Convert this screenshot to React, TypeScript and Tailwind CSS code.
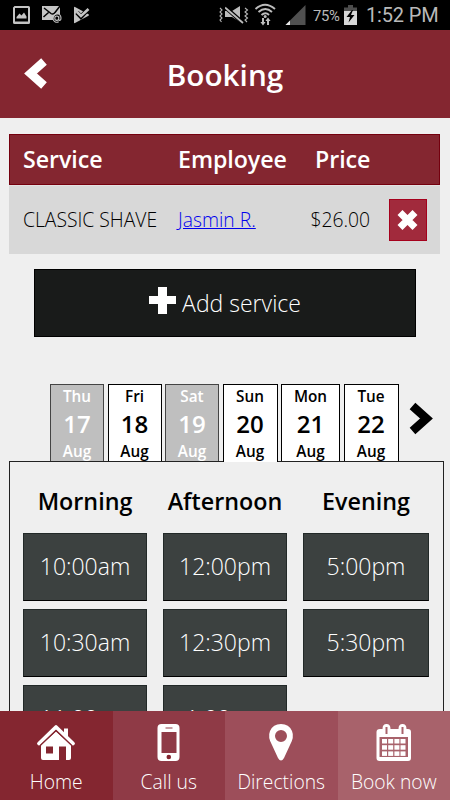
import { clsx } from "clsx";
import type { ReactNode } from "react";

const days = [
  { day: "Thu", date: 17, width: "w-[54px]", disabled: true },
  { day: "Fri", date: 18, width: "w-[54px]" },
  { day: "Sat", date: 19, width: "w-[54px]", disabled: true },
  { day: "Sun", date: 20, width: "w-[55px]", active: true },
  { day: "Mon", date: 21, width: "w-[59px]" },
  { day: "Tue", date: 22, width: "w-[55px]" },
];

const slots = [
  { name: "Morning", times: ["10:00am", "10:30am", "11:00am"] },
  { name: "Afternoon", times: ["12:00pm", "12:30pm", "1:00pm"] },
  { name: "Evening", times: ["5:00pm", "5:30pm"] },
];

function StatusBar() {
  return (
    <div className="flex h-[30px] shrink-0 items-center bg-black font-[Roboto,sans-serif] text-[#b9b9b9]">
      <svg width="225" height="30" fill="#c4c4c4">
        <path fillRule="evenodd" d="M14.500 6h14q1.500 0 1.500 1.500v15q0 1.500-1.500 1.500h-14q-1.500 0-1.500-1.500v-15Q13 7.500 14.500 6zM15 8v13.500h13V8z" />
        <path d="M16.500 18.500v-1.500l3-3.500 2 2 2.500-3 2.500 4v2z" />
        <path d="M42 6h18v8q-6-1-7 6H42z" />
        <path d="M43.500 17l5-4.500M44 8l7 5.500q2 1.500 4-1L60 6" fill="none" stroke="#000" strokeWidth="1.500" />
        <path d="M58.800 18.200a2 2.200 0 1 1-4 0a2 2.200 0 0 1 4 0zm0-2v3q0 1.300 1.100 1.300q1.200-.3 1.100-2.500a4.100 4.300 0 1 0-2.300 3.800" fill="none" stroke="#c4c4c4" strokeWidth="1.100" />
        <path d="M74 7.500q0-1 1-.5l13.500 7.200q1 .8 0 1.500L75 23q-1 .5-1-.5z" />
        <path d="M77 12.500l4 4.300 7-7.500" fill="none" stroke="#000" strokeWidth="4.500" />
        <path d="M77 12l4 4 7.500-7" fill="none" stroke="#c4c4c4" strokeWidth="2.600" />
        <path d="M220 8l2 2-2 2 2 2-2 2 2 2-2 2 1.500 2" fill="none" stroke="#b5b5b5" strokeWidth="1.100" />
      </svg>
      <svg width="86" height="30" fill="#bdbdbd">
        <path d="M0 11h7l8-5v16l-8-5H0z" />
        <path d="M0 7l18 16" stroke="#000" strokeWidth="4" />
        <path d="M0 7.500l18 15.500" stroke="#bdbdbd" strokeWidth="1.800" />
        <path d="M20 8l2.500 2-2.500 2 2.500 2-2.500 2 2.500 2-2.500 2 2 2" fill="none" stroke="#b5b5b5" strokeWidth="1.100" />
        <g fill="none" stroke="#bdbdbd" strokeWidth="1.900">
          <path d="M30.500 9q9.500-8.500 19.500 0" />
          <path d="M33.500 12q6.800-6 13.500 0" />
          <path d="M36.500 15q4-3.600 7.500 0" />
        </g>
        <circle cx="40.200" cy="16.500" r="1.500" />
        <path d="M37 18h2v4h1.600L38 25.500 35.400 22H37zM42 25h2v-4h1.600L43 17.500 40.400 21H42z" />
        <path d="M80.500 5v20h-20z" fill="#505050" />
        <path d="M65 20.500V25h-4.500z" fill="#e8e8e8" />
      </svg>
      <span className="ml-0.5 h-[18px] w-[28px] text-[14.800px] leading-[20px] tracking-[-0.300px]">75%</span>
      <svg className="ml-[3px]" width="13" height="30">
        <path d="M4 5h5v2.500h4V13H0V7.500h4z" fill="#4d4d4d" />
        <path d="M0 11h13v14H0z" fill="#d7d7d7" />
        <path d="M8 10l-5.500 7H6l-1.500 5.500 6-7.500H7L9 10z" fill="#000" />
      </svg>
      <span className="ml-[9px] whitespace-nowrap text-[20px] leading-[32px] tracking-[-0.150px]">1:52 PM</span>
    </div>
  );
}

function ServiceTable() {
  return (
    <section className="mx-[9px] mr-[10px]">
      <div className="grid h-[51px] grid-cols-[155px_137px_1fr] items-center border border-[#74000e] bg-[#842630] pl-[13px] text-[23.200px] font-semibold tracking-[-0.050px] text-white">
        <span>Service</span>
        <span>Employee</span>
        <span>Price</span>
      </div>
      <div className="flex h-[69px] items-center border-t border-[#e2e2e2] bg-[#d8d8d8] pl-[14px] text-[19.300px] font-light text-black">
        <span className="w-[155px] whitespace-nowrap">CLASSIC SHAVE</span>
        <a href="#employee" className="w-[100px] text-[#0000ee] underline">Jasmin R.</a>
        <span className="w-[92px] text-right">$26.00</span>
        <button className="ml-[19px] flex h-[42px] w-[38px] items-center justify-center border border-[#a5001c] bg-[#a12a3c]">
          <svg width="22" height="22" viewBox="0 0 22 22">
            <path d="M3 3.500l15 15M18 3.500L3 18.500" stroke="#fff" strokeWidth="7" />
          </svg>
        </button>
      </div>
    </section>
  );
}

function DayTabs() {
  return (
    <div className="relative z-10 mt-[47px] -mb-px ml-[50px] flex h-[78px] gap-[3.500px]">
      {days.map((d) => (
        <button
          key={d.day}
          className={clsx(
            "flex shrink-0 flex-col items-center justify-start border border-b-0 font-semibold",
            d.width,
            d.disabled ? "border-[#444] bg-[#bfbfbf] text-white" : "border-black bg-white text-black",
            d.active ? "h-[78px]" : "h-[77px]"
          )}
        >
          <span className="h-[24px] text-[15.300px] leading-[22px]">{d.day}</span>
          <span className="h-[30px] text-[24px] leading-[29px]">{d.date}</span>
          <span className="h-[22px] text-[15.300px] leading-[24px]">Aug</span>
        </button>
      ))}
      <svg className="ml-[7px] mt-[18px]" width="26" height="33" viewBox="0 0 26 33">
        <path d="M3.500 4L17.500 16.500 3.500 29" fill="none" stroke="#000" strokeWidth="8.500" />
      </svg>
    </div>
  );
}

function NavItem({ label, className, children }: { label: string; className: string; children: ReactNode }) {
  return (
    <a href="#nav" className={clsx("flex flex-col items-center pt-[12px] text-[19.300px] font-light text-white", className)}>
      <svg width="40" height="40" viewBox="0 0 40 40" fill="#fff">{children}</svg>
      <span className="mt-[5px] whitespace-nowrap leading-[27px]">{label}</span>
    </a>
  );
}

export default function App() {
  return (
    <div className="flex h-[800px] w-[450px] flex-col overflow-hidden bg-[#efefef] font-['Open_Sans',sans-serif]">
      <StatusBar />
      <header className="grid h-[88px] shrink-0 grid-cols-[72px_1fr_72px] items-center bg-[#842630] text-white">
        <svg className="ml-[22px] mb-[3px]" width="28" height="34" viewBox="0 0 28 34">
          <path d="M22 5.500L8.500 17.500 22 29.500" fill="none" stroke="#fff" strokeWidth="8.500" />
        </svg>
        <h1 className="pt-[2px] text-center text-[29.700px] font-semibold">Booking</h1>
      </header>

      <main className="flex-1 overflow-hidden pt-[16px]">
        <ServiceTable />
        <button className="mx-[34px] mt-[15px] flex h-[68px] w-[382px] items-center justify-center border border-black bg-[#191b1a] text-[23px] font-light text-white">
          <svg className="mr-[6px] mb-[5px]" width="27" height="27">
            <path d="M9 0h9v9h9v8h-9v10H9V17H0V9h9z" fill="#fff" />
          </svg>
          Add service
        </button>
        <DayTabs />
        <section className="mr-[6px] ml-[9px] grid grid-cols-[124px_124px_126px] gap-4 border border-[#222] pl-[13px]">
          {slots.map((group) => (
            <div key={group.name} className="flex flex-col gap-2">
              <h2 className="flex h-[63px] items-center justify-center pt-[16px] text-[23.300px] font-semibold text-black">
                {group.name}
              </h2>
              {group.times.map((time) => (
                <button key={time} className="h-[68px] border border-[#222928] border-b-black bg-[#3c4140] pb-0.5 text-[23px] font-light text-white">
                  {time}
                </button>
              ))}
            </div>
          ))}
        </section>
      </main>

      <nav className="grid h-[89px] shrink-0 grid-cols-4">
        <NavItem label="Home" className="bg-[#842630]">
          <path d="M3 20.500L20 4l17 16.500" fill="none" stroke="#fff" strokeWidth="3.800" strokeLinecap="round" strokeLinejoin="round" />
          <path d="M28 5.500h4v10l-4-4z" />
          <path fillRule="evenodd" d="M5 22L20 8.500 35 22v13q0 2-2 2H7q-2 0-2-2zm5 1.500v7h7v-7zm13 0V37h7V23.500z" />
          <path d="M4.500 22.200L20 7.500l15.500 14.700" fill="none" stroke="#842630" strokeWidth="1.200" />
        </NavItem>
        <NavItem label="Call us" className="bg-[#8f3a46]">
          <path fillRule="evenodd" d="M12.500 1h14q4 0 4 4v29q0 4-4 4h-14q-4 0-4-4V5q0-4 4-4zm0 8v21h15V9zm4-4.500v1h7v-1z" />
          <circle cx="19.800" cy="34" r="2.300" fill="#842630" />
        </NavItem>
        <NavItem label="Directions" className="bg-[#9d4e5a]">
          <path fillRule="evenodd" d="M20 1q8 0 11 7 2.500 6-2 14l-6 13q-3 5-6 0l-6-13Q6.500 14 9 8 12 1 20 1zm0 6a6 6 0 1 0 0 12 6 6 0 0 0 0-12z" />
        </NavItem>
        <NavItem label="Book now" className="bg-[#a8626b]">
          <path fillRule="evenodd" d="M6 6h2.500q0-5 4-5t4 5h8q0-5 4-5t4 5H34q3 0 3 3v26q0 3-3 3H5.500q-3 0-3-3V9q0-3 3.500-3zm-.500 8v20H34V14zM11.500 4v7h2V4zm16 0v7h2V4z" />
          {[16, 22.200, 28.400].map((y) =>
            [8, 14.200, 20.400, 26.500].map((x) => <rect key={`${x}-${y}`} x={x} y={y} width="5" height="4.500" />)
          )}
        </NavItem>
      </nav>
    </div>
  );
}
